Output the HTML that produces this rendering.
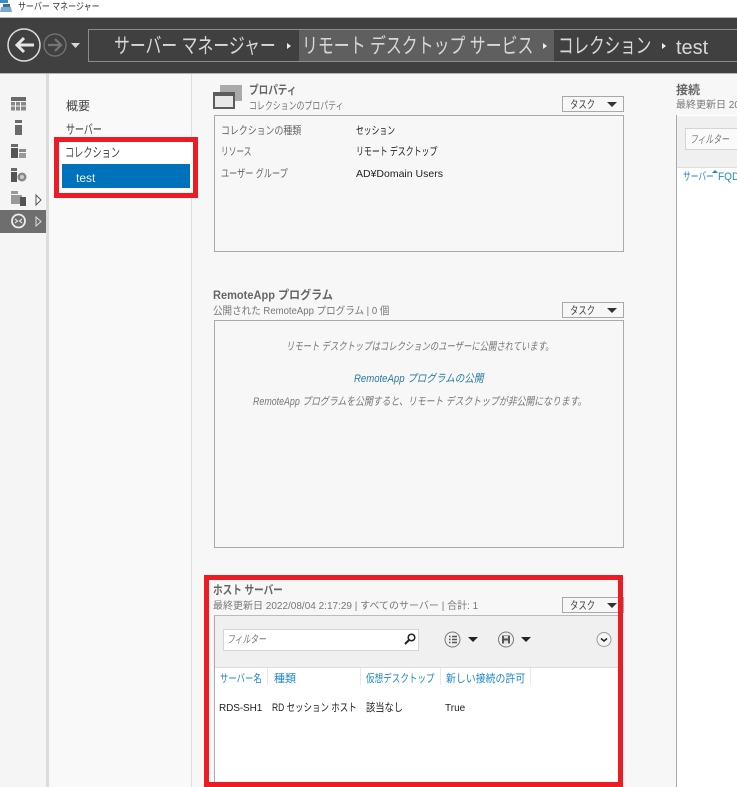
<!DOCTYPE html>
<html lang="ja"><head><meta charset="utf-8"><style>
html,body{margin:0;padding:0}
body{width:737px;height:787px;overflow:hidden;position:relative;background:#f7f7f7;font-family:"Liberation Sans","Noto Sans CJK JP",sans-serif;color:#333}
.a,.t{position:absolute}
.t{white-space:nowrap;line-height:1.2;transform-origin:0 0}
.s{font-size:10.5px;color:#777}
.h{font-size:12px;color:#666;font-weight:bold}
.l{font-size:11px;color:#666}
.v{font-size:11px;color:#222}
.b{font-size:21px;color:#d8d8d8}
.n{font-size:13px;color:#444}
.c{font-size:11px;color:#1f86c8}
.box{position:absolute;border:1px solid #aaa;box-sizing:border-box}
.task{position:absolute;width:62px;height:16px;border:1px solid #a8a8a8;box-sizing:border-box;background:#f7f7f7}
.task b{position:absolute;left:7px;top:1px;font-weight:normal;font-size:11px;line-height:14px;color:#444;white-space:nowrap;transform:scaleX(.76);transform-origin:0 0}
.task i{position:absolute;right:6px;top:5px;width:0;height:0;border-left:5px solid transparent;border-right:5px solid transparent;border-top:5px solid #333}
.tri{position:absolute;width:0;height:0;border-left:5px solid transparent;border-right:5px solid transparent;border-top:5px solid #222}
.bt{position:absolute;width:0;height:0;border-top:3px solid transparent;border-bottom:3px solid transparent;border-left:4px solid #eee}
.i{font-style:italic;font-size:11px;color:#777}
</style></head><body>

<!-- title bar -->
<div class="a" style="left:0;top:0;width:737px;height:17px;background:#fff"></div>
<svg class="a" style="left:0;top:0" width="14" height="14"><rect x="0" y="0" width="8" height="3" fill="#3a8cc8"/><path d="M1 7h10l1 5H0z" fill="#7fa8c8"/><rect x="3" y="4" width="7" height="3" fill="#3a6f98"/></svg>
<div class="t" style="left:18px;top:2px;font-size:10px;color:#333;transform:scaleX(.8)">サーバー マネージャー</div>

<!-- header -->
<div class="a" style="left:0;top:17px;width:737px;height:57px;background:#404040;border-top:1px solid #b5b5b5;border-bottom:1px solid #b5b5b5;box-sizing:border-box"></div>
<svg class="a" style="left:6px;top:28px" width="78" height="34">
<circle cx="18" cy="17" r="16" fill="none" stroke="#dcdcdc" stroke-width="1.500"/>
<path d="M28 17H11M18 10l-7 7 7 7" fill="none" stroke="#e6e6e6" stroke-width="3"/>
<circle cx="49" cy="17" r="11" fill="none" stroke="#757575" stroke-width="1.300"/>
<path d="M42 17h13M49 11l6 6-6 6" fill="none" stroke="#757575" stroke-width="2.200"/>
<path d="M65 15h9l-4.500 5z" fill="#d8d8d8"/>
</svg>
<div class="a" style="left:88px;top:29px;width:649px;height:33px;border:1px solid #8c8c8c;border-right:0;box-sizing:border-box"></div>
<div class="a" style="left:299px;top:30px;width:255px;height:31px;background:#5f5f5f"></div>
<div class="t b" style="left:114px;top:34px;transform:scaleX(.755)">サーバー マネージャー</div>
<div class="bt" style="left:287px;top:43px"></div>
<div class="t b" style="left:302px;top:34px;transform:scaleX(.757)">リモート デスクトップ サービス</div>
<div class="bt" style="left:543px;top:43px"></div>
<div class="t b" style="left:558px;top:34px;transform:scaleX(.74)">コレクション</div>
<div class="bt" style="left:662px;top:43px"></div>
<div class="t" style="left:676px;top:36px;font-size:20px;color:#d8d8d8">test</div>

<!-- left rail -->
<div class="a" style="left:0;top:74px;width:46px;height:713px;background:#f5f5f5"></div>
<div class="a" style="left:46px;top:74px;width:3px;height:713px;background:#dcdcdc"></div>
<div class="a" style="left:49px;top:74px;width:142px;height:713px;background:#f9f9f9"></div>
<div class="a" style="left:191px;top:74px;width:1px;height:713px;background:#dedede"></div>
<div class="a" style="left:0;top:210px;width:46px;height:23px;background:#6e6e6e"></div>
<svg class="a" style="left:0;top:90px" width="46" height="145">
<g fill="#6a6a6a">
<rect x="11" y="7" width="15" height="4"/>
<rect x="11" y="12" width="4" height="3.500" fill="#888"/><rect x="16" y="12" width="4" height="3.500" fill="#888"/><rect x="21" y="12" width="5" height="3.500" fill="#888"/>
<rect x="11" y="16.500" width="4" height="4" fill="#888"/><rect x="16" y="16.500" width="4" height="4" fill="#888"/><rect x="21" y="16.500" width="5" height="4" fill="#888"/>
<rect x="15" y="30" width="7" height="3"/><rect x="15" y="35" width="7" height="10"/>
<rect x="11" y="54" width="7" height="3"/><rect x="11" y="58" width="7" height="10" fill="#555"/><rect x="19" y="59" width="7" height="3" fill="#888"/><rect x="19" y="63" width="7" height="5" fill="#999"/>
<rect x="11" y="78" width="6" height="3"/><rect x="11" y="82" width="6" height="10" fill="#555"/><circle cx="22" cy="87" r="4.500" fill="#888"/><circle cx="22" cy="87" r="2" fill="#ccc"/>
<rect x="11" y="101" width="7" height="3" fill="#999"/><rect x="11" y="105" width="11" height="9" fill="#999"/><rect x="20" y="107" width="6" height="9" fill="#555"/>
</g>
<path d="M36 105v10l5-5z" fill="#fff" stroke="#555"/>
<circle cx="18.500" cy="131" r="6.500" fill="none" stroke="#eee" stroke-width="1.800"/>
<path d="M15 129l2.500 2-2.500 2M22 129l-2.500 2 2.500 2" fill="none" stroke="#eee" stroke-width="1.100"/>
<path d="M36 127v9l5-4.500z" fill="#6e6e6e" stroke="#ddd"/>
</svg>

<!-- nav -->
<div class="t" style="left:66px;top:99px;font-size:12px;color:#444">概要</div>
<div class="t n" style="left:66px;top:122px;transform:scaleX(.69)">サーバー</div>
<div class="a" style="left:59px;top:142px;width:134px;height:50px;background:#fff"></div>
<div class="t n" style="left:65px;top:145px;transform:scaleX(.705)">コレクション</div>
<div class="a" style="left:62px;top:164px;width:128px;height:24px;background:#0072bc"></div>
<div class="t" style="left:76px;top:171px;font-size:12px;color:#e8f2fa">test</div>
<div class="a" style="left:54px;top:137px;width:144px;height:61px;border:5px solid #ed1c24;box-sizing:border-box"></div>

<!-- properties -->
<svg class="a" style="left:213px;top:84px" width="34" height="26">
<rect x="7" y="1" width="22" height="16" fill="#aaa"/>
<rect x="1" y="9" width="20" height="15" fill="#e8e8e8" stroke="#5c5c5c" stroke-width="2"/>
<rect x="0" y="8" width="22" height="4" fill="#5c5c5c"/>
</svg>
<div class="t h" style="left:249px;top:83px;transform:scaleX(.8)">プロパティ</div>
<div class="t s" style="left:249px;top:100px;transform:scaleX(.754)">コレクションのプロパティ</div>
<div class="task" style="left:562px;top:96px"><b>タスク</b><i></i></div>
<div class="box" style="left:214px;top:115px;width:410px;height:137px"></div>
<div class="t l" style="left:221px;top:125px;transform:scaleX(.81)">コレクションの種類</div>
<div class="t l" style="left:221px;top:146px;transform:scaleX(.7)">リソース</div>
<div class="t l" style="left:221px;top:168px;transform:scaleX(.74)">ユーザー グループ</div>
<div class="t v" style="left:356px;top:125px;transform:scaleX(.71)">セッション</div>
<div class="t v" style="left:356px;top:146px;transform:scaleX(.72)">リモート デスクトップ</div>
<div class="t v" style="left:356px;top:168px;font-size:10.5px">AD¥Domain Users</div>

<!-- RemoteApp -->
<div class="t h" style="left:213px;top:288px;transform:scaleX(.92)">RemoteApp プログラム</div>
<div class="t s" style="left:213px;top:305px;transform:scaleX(.91)">公開された RemoteApp プログラム | 0 個</div>
<div class="task" style="left:562px;top:302px"><b>タスク</b><i></i></div>
<div class="box" style="left:214px;top:320px;width:410px;height:228px"></div>
<div class="t i" style="left:286px;top:341px;transform:scaleX(.757)">リモート デスクトップはコレクションのユーザーに公開されています。</div>
<div class="t i" style="left:354px;top:373px;color:#2a7ba0;transform:scaleX(.87)">RemoteApp プログラムの公開</div>
<div class="t i" style="left:253px;top:396px;transform:scaleX(.805)">RemoteApp プログラムを公開すると、リモート デスクトップが非公開になります。</div>

<!-- connections -->
<div class="a" style="left:676px;top:78px;width:61px;height:709px;overflow:hidden">
<div class="t h" style="left:0;top:5px">接続</div>
<div class="t" style="left:0;top:22px;font-size:10px;color:#777">最終更新日 2022/08/04</div>
<div class="a" style="left:0;top:37px;width:61px;height:672px;background:#fff;border-left:1px solid #aaa;box-sizing:border-box"></div>
<div class="a" style="left:1px;top:38px;width:60px;height:52px;background:#f0f0f0;border-bottom:1px solid #ddd;box-sizing:border-box"></div>
<div class="a" style="left:9px;top:50px;width:52px;height:22px;background:#fafafa;border:1px solid #d5d5d5;border-right:0;box-sizing:border-box"></div>
<div class="t i" style="left:14px;top:56px;transform:scaleX(.71)">フィルター</div>
<div class="t c" style="left:7px;top:93px;transform:scaleX(.7)">サーバー</div>
<div class="t c" style="left:42px;top:93px;transform:scaleX(.92)">FQDN</div>
<div class="a" style="left:36px;top:92px;width:0;height:0;border-left:3px solid transparent;border-right:3px solid transparent;border-bottom:3px solid #1f86c8"></div>
</div>

<!-- host servers -->
<div class="t h" style="left:213px;top:583px;transform:scaleX(.8)">ホスト サーバー</div>
<div class="t" style="left:213px;top:601px;font-size:10px;color:#777">最終更新日 2022/08/04 2:17:29 | すべてのサーバー | 合計: 1</div>
<div class="task" style="left:562px;top:597px"><b>タスク</b><i></i></div>
<div class="a" style="left:214px;top:615px;width:405px;height:168px;background:#fff;border-left:1px solid #aaa;border-top:1px solid #bbb;box-sizing:border-box"></div>
<div class="a" style="left:215px;top:616px;width:404px;height:52px;background:#f0f0f0;border-bottom:1px solid #ddd;box-sizing:border-box"></div>
<div class="a" style="left:223px;top:629px;width:196px;height:22px;background:#fff;border:1px solid #d5d5d5;box-sizing:border-box"></div>
<div class="t i" style="left:227px;top:634px;transform:scaleX(.71)">フィルター</div>
<svg class="a" style="left:403px;top:632px" width="14" height="14"><circle cx="8.500" cy="5.500" r="3.300" fill="none" stroke="#222" stroke-width="1.500"/><path d="M6 8l-4 4" stroke="#222" stroke-width="2"/></svg>
<svg class="a" style="left:444px;top:630px" width="170" height="20" fill="none">
<circle cx="8.500" cy="9.500" r="7.500" stroke="#777"/>
<path d="M5 6.500h1.500M5 9.500h1.500M5 12.500h1.500M8 6.500h5M8 9.500h5M8 12.500h5" stroke="#555" stroke-width="1.500"/>
<circle cx="62" cy="9.500" r="7.500" stroke="#777"/>
<path d="M58 5.500h8v8h-8z" fill="#555"/><rect x="60" y="6" width="4" height="2.500" fill="#ddd"/><rect x="60" y="10.500" width="4" height="3" fill="#ddd"/>
<circle cx="160" cy="9.500" r="7" stroke="#999" fill="#f5f5f5"/>
<path d="M157 8.500l3 2.500 3-2.500" stroke="#222" stroke-width="1.500"/>
</svg>
<div class="tri" style="left:468px;top:637px"></div>
<div class="tri" style="left:521px;top:637px"></div>

<div class="t c" style="left:220px;top:673px;transform:scaleX(.76)">サーバー名</div>
<div class="t c" style="left:274px;top:673px">種類</div>
<div class="t c" style="left:366px;top:673px;transform:scaleX(.78)">仮想デスクトップ</div>
<div class="t c" style="left:446px;top:673px;transform:scaleX(.9)">新しい接続の許可</div>
<div class="a" style="left:267px;top:668px;width:1px;height:17px;background:#e8e8e8"></div>
<div class="a" style="left:360px;top:668px;width:1px;height:17px;background:#e8e8e8"></div>
<div class="a" style="left:440px;top:668px;width:1px;height:17px;background:#e8e8e8"></div>
<div class="a" style="left:530px;top:668px;width:1px;height:17px;background:#e8e8e8"></div>
<div class="t" style="left:219px;top:703px;font-size:10px;color:#222;letter-spacing:-.1px">RDS-SH1</div>
<div class="t v" style="left:272px;top:702px;transform:scaleX(.77)">RD セッション ホスト</div>
<div class="t v" style="left:366px;top:702px;transform:scaleX(.84)">該当なし</div>
<div class="t" style="left:445px;top:703px;font-size:10px;color:#222">True</div>

<div class="a" style="left:204px;top:575px;width:419px;height:212px;border:5px solid #ed1c24;box-sizing:border-box"></div>
</body></html>
